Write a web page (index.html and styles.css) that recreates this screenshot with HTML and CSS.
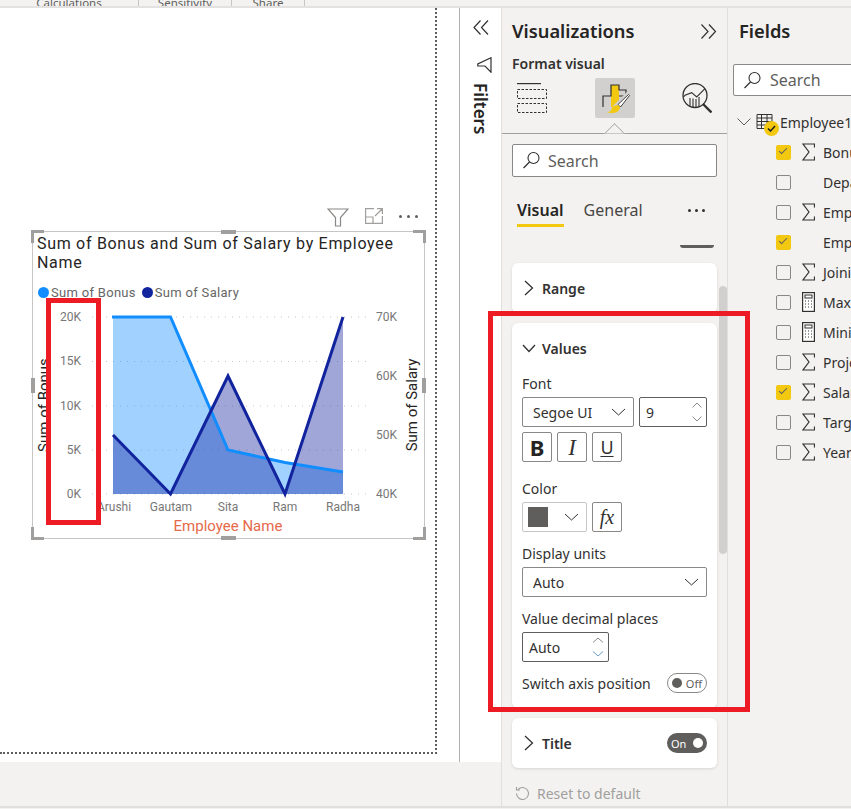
FILE: index.html
```html
<!DOCTYPE html>
<html lang="en">
<head>
    <meta charset="UTF-8">
    <link rel="stylesheet" href="styles.css">
    <title>Format visual</title>
</head>
<body>
    <svg class="defs" width="0" height="0">
        <symbol id="sum" viewBox="0 0 13 18"><path d="M12.500 4.500V1H1l6 8-6 8h11.500v-3.500" fill="none" stroke="#323130" stroke-width="1.200"/></symbol>
        <symbol id="calc" viewBox="0 0 13 20">
            <rect x=".6" y=".6" width="11.800" height="18.800" fill="#fff" stroke="#323130" stroke-width="1.200"/>
            <rect x="3" y="3" width="7" height="3" fill="none" stroke="#323130"/>
            <path d="M3 9h1M6 9h1M9 9h1M3 12h1M6 12h1M9 12h1M3 15h1M6 15h1M9 15h1" stroke="#323130"/>
        </symbol>
    </svg>

    <div class="ribbon">
        <span class="ribbon-group w-calc">Calculations</span>
        <span class="ribbon-group w-sens">Sensitivity</span>
        <span class="ribbon-group w-share">Share</span>
    </div>

    <div class="workspace">
        <div class="report-area">
            <div class="canvas-row">
                <div class="canvas">
                    <div class="visual-tools">
                        <svg width="22" height="19" viewBox="0 0 22 19"><path d="M1 1h20l-7.500 8.500V18h-5V9.500z" fill="none" stroke="#8a8886" stroke-width="1.200"/></svg>
                        <svg width="18" height="16" viewBox="0 0 18 16"><path d="M9 .6H.6v14.800h16.800V8M.6 9H8v6.400M10 8l7-7M12 .6h5.400V6" fill="none" stroke="#a19f9d" stroke-width="1.200"/></svg>
                        <span class="tool-dots"><i></i><i></i><i></i></span>
                    </div>
                    <div class="visual">
                        <h3 class="visual-title">Sum of Bonus and Sum of Salary by Employee Name</h3>
                        <div class="legend">
                            <span class="legend-item"><i class="dot dot-bonus"></i>Sum of Bonus</span>
                            <span class="legend-item"><i class="dot dot-salary"></i>Sum of Salary</span>
                        </div>
                        <svg class="chart" width="390" height="240" viewBox="0 0 390 240">
                            <g class="grid">
                                <line x1="59" x2="333" y1="12" y2="12"/>
                                <line x1="59" x2="333" y1="56.500" y2="56.500"/>
                                <line x1="59" x2="333" y1="101" y2="101"/>
                                <line x1="59" x2="333" y1="145" y2="145"/>
                                <line x1="59" x2="333" y1="189" y2="189"/>
                            </g>
                            <path d="M80 12L137.500 12L195 145L252 157.500L310 167V189H80Z" fill="#118dff" opacity=".4"/>
                            <path d="M80 130L137.500 189L195 71L252 189L310 12V189H80Z" fill="#12239e" opacity=".4"/>
                            <path d="M79 12L137.500 12L195 145L252 157.500L310 167" fill="none" stroke="#118dff" stroke-width="3"/>
                            <path d="M80 130L137.500 189L195 71L252 189L310 12" fill="none" stroke="#12239e" stroke-width="3"/>
                            <g class="tick" text-anchor="end">
                                <text x="48" y="16">20K</text>
                                <text x="48" y="60">15K</text>
                                <text x="48" y="105">10K</text>
                                <text x="48" y="149">5K</text>
                                <text x="48" y="193">0K</text>
                                <text x="364" y="16">70K</text>
                                <text x="364" y="75">60K</text>
                                <text x="364" y="134">50K</text>
                                <text x="364" y="193">40K</text>
                            </g>
                            <g class="tick" text-anchor="middle">
                                <text x="81" y="206">Arushi</text>
                                <text x="138" y="206">Gautam</text>
                                <text x="195" y="206">Sita</text>
                                <text x="252" y="206">Ram</text>
                                <text x="310" y="206">Radha</text>
                            </g>
                            <text class="axis-name axis-x" x="195" y="226" text-anchor="middle">Employee Name</text>
                            <text class="axis-name" transform="translate(16 100) rotate(-90)" text-anchor="middle">Sum of Bonus</text>
                            <text class="axis-name" transform="translate(384 100) rotate(-90)" text-anchor="middle">Sum of Salary</text>
                        </svg>
                        <i class="handle h-tl"></i><i class="handle h-tm"></i><i class="handle h-tr"></i>
                        <i class="handle h-ml"></i><i class="handle h-mr"></i>
                        <i class="handle h-bl"></i><i class="handle h-bm"></i><i class="handle h-br"></i>
                    </div>
                </div>
                <aside class="filters">
                    <svg width="16" height="15" viewBox="0 0 16 15"><path d="M7.500 .5L1 7.500l6.500 7M15 .5L8.500 7.500l6.500 7" fill="none" stroke="#323130" stroke-width="1.200"/></svg>
                    <svg width="15" height="16" viewBox="0 0 15 16" class="filter-icon"><path d="M14 .8v14.400L8 9H.8V7z" fill="none" stroke="#323130" stroke-width="1.200"/></svg>
                    <span class="filters-label">Filters</span>
                </aside>
            </div>
            <div class="page-bar"></div>
        </div>

        <section class="viz-pane">
            <div class="pane-head">
                <h2>Visualizations</h2>
                <svg width="17" height="15" viewBox="0 0 17 15"><path d="M1.500 .5L8 7.500l-6.500 7M9 .5l6.500 7L9 14.500" fill="none" stroke="#323130" stroke-width="1.200"/></svg>
            </div>
            <div class="format-label">Format visual</div>
            <div class="mode-icons">
                <svg width="30" height="30" viewBox="0 0 30 30"><path d="M0 .6h24" stroke="#323130" stroke-width="1.200"/><path d="M.5 6.500h29v9H.5zM.5 20.500h29v9H.5z" fill="none" stroke="#323130" stroke-dasharray="2.500 1.500"/></svg>
                <span class="mode-active">
                    <svg width="30" height="32" viewBox="0 0 30 32">
                        <rect x="11" y="3" width="8" height="22" fill="#f2c811"/>
                        <path d="M3 25V14h8V3h8v5h7v6h-7" fill="none" stroke="#323130" stroke-width="1.200"/>
                        <path d="M15 26L29 12" stroke="#d2d0ce" stroke-width="6"/>
                        <path d="M18 22.500L28.500 12.500 29.500 13.500 20.500 25z" fill="#fff" stroke="#323130" stroke-width=".9"/>
                        <path d="M7 30c3 0 4-1 5-4 1-2 4-3 6-3l2 2c0 3-3 6-7 6-2 0-5 0-6-1z" fill="#f2c811"/>
                    </svg>
                </span>
                <svg width="30" height="30" viewBox="0 0 30 30"><circle cx="13" cy="12.500" r="12" fill="none" stroke="#323130" stroke-width="1.300"/><path d="M1.500 14L3 12.300l6.700-2.600 5 4.300L23 5.700M8 15v9M11 15.500v9M14 16v9M17 14v10" fill="none" stroke="#323130" stroke-width="1.100"/><path d="M21 21l8.500 8.500" stroke="#323130" stroke-width="2.400"/></svg>
            </div>
            <div class="mode-rule"></div>
            <div class="search-box viz-search">
                <svg width="19" height="19" viewBox="0 0 19 19"><circle cx="11.500" cy="7" r="5.500" fill="none" stroke="#323130" stroke-width="1.100"/><path d="M7.500 11L1.500 17" stroke="#323130" stroke-width="1.200"/></svg>
                <span>Search</span>
            </div>
            <div class="tabs">
                <span class="tab tab-active">Visual</span>
                <span class="tab">General</span>
                <span class="tab-dots"><i></i><i></i><i></i></span>
            </div>
            <div class="scroll-stub"></div>

            <div class="cards">
                <div class="card card-collapsed">
                    <svg width="10" height="16" viewBox="0 0 10 16"><path d="M1 1l7.500 7L1 15" fill="none" stroke="#323130" stroke-width="1.300"/></svg>
                    <span class="card-title">Range</span>
                </div>
                <div class="card card-values">
                    <div class="card-open-head">
                        <svg width="14" height="9" viewBox="0 0 14 9"><path d="M1 1l6 6.500L13 1" fill="none" stroke="#323130" stroke-width="1.300"/></svg>
                        <span class="card-title">Values</span>
                    </div>
                    <label class="field-label lbl-font">Font</label>
                    <div class="row">
                        <div class="select w-font"><span>Segoe UI</span><svg width="15" height="8" viewBox="0 0 15 8"><path d="M1 1l6.500 6L14 1" fill="none" stroke="#323130"/></svg></div>
                        <div class="spin w-size">
                            <span>9</span>
                            <span class="spin-arrows"><svg width="10" height="6" viewBox="0 0 10 6"><path d="M.5 5.500L5 1l4.500 4.500" fill="none" stroke="#8a8886"/></svg><svg width="10" height="6" viewBox="0 0 10 6"><path d="M.5.500L5 5 9.500.5" fill="none" stroke="#8a8886"/></svg></span>
                        </div>
                    </div>
                    <div class="row row-fmt">
                        <span class="fmt-btn fmt-b">B</span>
                        <span class="fmt-btn fmt-i">I</span>
                        <span class="fmt-btn fmt-u">U</span>
                    </div>
                    <label class="field-label lbl-color">Color</label>
                    <div class="row">
                        <div class="color-pick"><i class="swatch"></i><svg width="15" height="8" viewBox="0 0 15 8"><path d="M1 1l6.500 6L14 1" fill="none" stroke="#323130"/></svg></div>
                        <span class="fmt-btn fmt-fx">fx</span>
                    </div>
                    <label class="field-label lbl-units">Display units</label>
                    <div class="select w-full"><span>Auto</span><svg width="15" height="8" viewBox="0 0 15 8"><path d="M1 1l6.500 6L14 1" fill="none" stroke="#323130"/></svg></div>
                    <label class="field-label lbl-dec">Value decimal places</label>
                    <div class="spin w-dec">
                        <span>Auto</span>
                        <span class="spin-arrows"><svg width="12" height="6" viewBox="0 0 12 6"><path d="M1 5.500L6 1l5 4.500" fill="none" stroke="#8a8886"/></svg><svg width="12" height="6" viewBox="0 0 12 6"><path d="M1 .5L6 5l5-4.500" fill="none" stroke="#6b9bc0"/></svg></span>
                    </div>
                    <div class="switch-row">
                        <span>Switch axis position</span>
                        <span class="toggle toggle-off"><i></i>Off</span>
                    </div>
                </div>
                <div class="card card-collapsed">
                    <svg width="10" height="16" viewBox="0 0 10 16"><path d="M1 1l7.500 7L1 15" fill="none" stroke="#323130" stroke-width="1.300"/></svg>
                    <span class="card-title">Title</span>
                    <span class="toggle toggle-on">On<i></i></span>
                </div>
            </div>
            <div class="reset">
                <svg width="15" height="15" viewBox="0 0 15 15"><path d="M3 3.500a6 6 0 1 1-1.500 4M1.500 1v3h3.500" fill="none" stroke="#a19f9d" stroke-width="1.100"/></svg>
                <span>Reset to default</span>
            </div>
            <div class="scrollbar"></div>
        </section>

        <section class="fields-pane">
            <h2>Fields</h2>
            <div class="search-box fields-search">
                <svg width="19" height="19" viewBox="0 0 19 19"><circle cx="11.500" cy="7" r="5.500" fill="none" stroke="#323130" stroke-width="1.100"/><path d="M7.500 11L1.500 17" stroke="#323130" stroke-width="1.200"/></svg>
                <span>Search</span>
            </div>
            <div class="table-row">
                <svg class="tree-chev" width="14" height="8" viewBox="0 0 14 8"><path d="M.5.500L7 7 13.500.5" fill="none" stroke="#605e5c"/></svg>
                <span class="table-icon">
                    <svg width="17" height="15" viewBox="0 0 17 15"><path d="M1 .5h15v14H1zM1 4h15M1 7.500h15M1 11h15M5.500 .5v14M11 .5v14" fill="none" stroke="#323130"/></svg>
                    <i class="table-badge"><svg width="9" height="7" viewBox="0 0 9 7"><path d="M1 3.500L3.500 6 8 1" fill="none" stroke="#201f1e" stroke-width="1.500"/></svg></i>
                </span>
                <span class="table-name">Employee1</span>
            </div>
            <ul class="field-list">
                <li><i class="check on"></i><svg class="kind" width="13" height="18"><use href="#sum"/></svg>Bonus</li>
                <li><i class="check"></i><i class="kind"></i>Department</li>
                <li><i class="check"></i><svg class="kind" width="13" height="18"><use href="#sum"/></svg>Employee ID</li>
                <li><i class="check on"></i><i class="kind"></i>Employee Name</li>
                <li><i class="check"></i><svg class="kind" width="13" height="18"><use href="#sum"/></svg>Joining Year</li>
                <li><i class="check"></i><svg class="kind" width="13" height="20"><use href="#calc"/></svg>Max of Salary</li>
                <li><i class="check"></i><svg class="kind" width="13" height="20"><use href="#calc"/></svg>Minimum</li>
                <li><i class="check"></i><svg class="kind" width="13" height="18"><use href="#sum"/></svg>Projects</li>
                <li><i class="check on"></i><svg class="kind" width="13" height="18"><use href="#sum"/></svg>Salary</li>
                <li><i class="check"></i><svg class="kind" width="13" height="18"><use href="#sum"/></svg>Target</li>
                <li><i class="check"></i><svg class="kind" width="13" height="18"><use href="#sum"/></svg>Year</li>
            </ul>
        </section>
    </div>

    <div class="callout callout-axis"></div>
    <div class="callout callout-values"></div>
</body>
</html>
```

FILE: styles.css
```css
* {
    box-sizing: border-box;
}

body {
    margin: 0;
    width: 851px;
    height: 809px;
    overflow: hidden;
    position: relative;
    background-color: #f3f2f1;
    font-family: "Noto Sans", "Open Sans", sans-serif;
    font-size: 14px;
    color: #323130;
}

i {
    font-style: normal;
}

h2, h3, ul {
    margin: 0;
    padding: 0;
}

svg {
    display: block;
    flex: none;
}

.defs {
    position: absolute;
}

/* ribbon strip, only the bottom edge is in the shot */
.ribbon {
    height: 8px;
    display: flex;
    overflow: hidden;
    background-color: #f3f2f1;
    border-bottom: 2px solid #e3e2e0;
    font-size: 11.500px;
    color: #605e5c;
}

.ribbon-group {
    height: 6px;
    display: flex;
    align-items: flex-end;
    justify-content: center;
    border-right: 1px solid #c8c6c4;
    line-height: 6px;
}

.w-calc { width: 139px; }
.w-sens { width: 93px; }
.w-share { width: 73px; }

.workspace {
    display: flex;
    height: 800px;
    border-bottom: 2px solid #e1dfdd;
}

.report-area {
    width: 501px;
    display: flex;
    flex-direction: column;
}

.canvas-row {
    height: 754px;
    display: flex;
    background-color: #fff;
}

.page-bar {
    flex: 1;
    background-color: #f3f2f1;
}

.canvas {
    position: relative;
    width: 460px;
    border-right: 1px solid #b3b0ad;
    padding-top: 200px;
}

/* page edge */
.canvas::after {
    content: "";
    position: absolute;
    left: 0;
    top: 0;
    width: 435px;
    height: 744px;
    border-right: 2px dotted #605e5c;
    border-bottom: 2px dotted #605e5c;
}

.visual-tools {
    height: 23px;
    width: 454px;
    padding-right: 36px;
    display: flex;
    justify-content: flex-end;
    align-items: flex-start;
    gap: 16px;
}

.tool-dots {
    display: flex;
    gap: 5px;
    margin-top: 7px;
    width: 19px;
}

.tool-dots i {
    width: 3px;
    height: 3px;
    border-radius: 50%;
    background-color: #605e5c;
}

.visual {
    position: relative;
    width: 393px;
    height: 308px;
    margin-left: 32px;
    border: 1px solid #c8c6c4;
    background-color: #fff;
}

.visual-title {
    padding: 2px 4px 0;
    font-family: "Roboto", sans-serif;
    font-size: 16px;
    font-weight: 400;
    line-height: 19px;
    letter-spacing: .7px;
    color: #252423;
}

.legend {
    display: flex;
    gap: 6px;
    margin: 12px 0 0 5px;
    font-family: "Roboto", sans-serif;
    font-size: 13px;
    line-height: 17px;
    letter-spacing: .3px;
    color: #666;
}

.legend-item {
    display: flex;
    align-items: center;
    gap: 2px;
}

.dot {
    width: 11px;
    height: 11px;
    border-radius: 50%;
}

.dot-bonus { background-color: #118dff; }
.dot-salary { background-color: #12239e; }

.chart {
    margin-top: 4px;
}

.grid line {
    stroke: #c8c6c4;
    stroke-dasharray: 1 6;
}

.tick text {
    font-family: "Roboto", sans-serif;
    font-size: 12px;
    fill: #777;
}

.axis-name {
    font-family: "Roboto", sans-serif;
    font-size: 15px;
    fill: #252423;
}

.axis-x {
    fill: #e6694a;
}

.handle {
    position: absolute;
    background-color: #a19f9d;
}

.h-tm, .h-bm { left: 188px; width: 15px; height: 4px; }
.h-tm { top: -2px; }
.h-bm { bottom: -2px; }
.h-ml, .h-mr { top: 146px; width: 4px; height: 15px; }
.h-ml { left: -2px; }
.h-mr { right: -2px; }

.h-tl, .h-tr, .h-bl, .h-br {
    width: 13px;
    height: 13px;
    background: none;
    border: 0 solid #a19f9d;
}

.h-tl { left: -2px; top: -2px; border-width: 3px 0 0 3px; }
.h-tr { right: -2px; top: -2px; border-width: 3px 3px 0 0; }
.h-bl { left: -2px; bottom: -2px; border-width: 0 0 3px 3px; }
.h-br { right: -2px; bottom: -2px; border-width: 0 3px 3px 0; }

/* filters rail */
.filters {
    width: 41px;
    padding-top: 12px;
    display: flex;
    flex-direction: column;
    align-items: center;
    color: #252423;
}

.filter-icon {
    margin-top: 22px;
    margin-left: 7px;
}

.filters-label {
    margin-top: 10px;
    margin-left: -2px;
    writing-mode: vertical-rl;
    font-size: 17px;
    font-weight: 600;
    line-height: 18px;
}

/* visualizations pane */
.viz-pane {
    position: relative;
    width: 227px;
    padding: 0 10px;
    border-left: 1px solid #e1dfdd;
    border-right: 1px solid #e1dfdd;
    background-color: #f3f2f1;
}

.pane-head {
    display: flex;
    justify-content: space-between;
    align-items: center;
    height: 28px;
    margin-top: 9px;
}

.pane-head h2, .fields-pane h2 {
    font-size: 18.300px;
    font-weight: 600;
    line-height: 28px;
    color: #252423;
}

.format-label {
    margin-top: 10px;
    font-size: 14px;
    font-weight: 600;
    line-height: 18px;
}

.mode-icons {
    display: flex;
    align-items: center;
    justify-content: space-between;
    margin: 5px -8px 0 5px;
    padding-right: 13px;
    height: 40px;
}

.mode-active {
    width: 40px;
    height: 40px;
    display: flex;
    align-items: center;
    justify-content: center;
    border-radius: 2px;
    background-color: #d2d0ce;
}

.mode-rule {
    position: relative;
    height: 1px;
    margin: 15px -10px 0;
    background-color: #a19f9d;
}

.mode-rule::after {
    content: "";
    position: absolute;
    left: 105px;
    top: -7px;
    width: 14px;
    height: 14px;
    transform: rotate(45deg);
    background-color: #f3f2f1;
    border-left: 1px solid #a19f9d;
    border-top: 1px solid #a19f9d;
    clip-path: polygon(0 0, 100% 0, 0 100%);
}

.search-box {
    display: flex;
    align-items: center;
    gap: 7px;
    height: 33px;
    border: 1px solid #8a8886;
    border-radius: 2px;
    background-color: #fff;
    padding-left: 9px;
    font-size: 16px;
    color: #605e5c;
}

.viz-search {
    margin-top: 10px;
    width: 205px;
}

.tabs {
    position: relative;
    display: flex;
    align-items: flex-start;
    gap: 20px;
    margin: 22px 0 0 5px;
    height: 32px;
    font-size: 16px;
    line-height: 22px;
    color: #484644;
}

.tab {
    height: 28px;
}

.tab-active {
    font-weight: 600;
    color: #252423;
    border-bottom: 3px solid #f2c811;
}

.tab-dots {
    position: absolute;
    right: 12px;
    top: 10px;
    display: flex;
    gap: 4px;
}

.tab-dots i {
    width: 3px;
    height: 3px;
    border-radius: 50%;
    background-color: #323130;
}

.scroll-stub {
    width: 34px;
    height: 3px;
    margin: 14px 0 0 168px;
    border-radius: 0 0 8px 8px;
    background-color: #605e5c;
}

.cards {
    display: flex;
    flex-direction: column;
    gap: 10px;
    margin-top: 15px;
    width: 205px;
}

.card {
    border-radius: 6px;
    background-color: #fff;
    box-shadow: 0 1px 3px rgba(0, 0, 0, .12);
}

.card-collapsed {
    height: 50px;
    padding: 0 10px 0 12px;
    display: flex;
    align-items: center;
    gap: 8px;
}

.card-title {
    font-size: 14px;
    font-weight: 600;
    color: #323130;
}

.card-values {
    height: 385px;
    padding: 15px 10px 0;
}

.card-open-head {
    display: flex;
    align-items: center;
    gap: 6px;
    height: 20px;
}

.field-label {
    display: block;
    font-size: 14px;
    line-height: 18px;
    color: #323130;
}

.lbl-font { margin-top: 17px; margin-bottom: 4px; }
.lbl-color { margin-top: 18px; margin-bottom: 4px; }
.lbl-units { margin-top: 13px; margin-bottom: 4px; }
.lbl-dec { margin-top: 13px; margin-bottom: 4px; }

.row {
    display: flex;
    gap: 5px;
}

.row-fmt {
    margin-top: 5px;
}

.select, .spin, .color-pick {
    display: flex;
    align-items: center;
    justify-content: space-between;
    height: 30px;
    border: 1px solid #8a8886;
    border-radius: 2px;
    font-size: 14px;
    background-color: #fff;
}

.select {
    padding: 0 7px 0 10px;
}

.w-font { width: 112px; }
.w-size { width: 68px; }
.w-full { width: 185px; }
.w-dec { width: 87px; }

.spin {
    padding: 0 3px 0 6px;
    border-color: #605e5c;
}

.spin-arrows {
    display: flex;
    flex-direction: column;
    gap: 8px;
    margin-right: 1px;
}

.fmt-btn {
    width: 30px;
    height: 30px;
    display: flex;
    align-items: center;
    justify-content: center;
    border: 1px solid #8a8886;
    border-radius: 2px;
    background-color: #fff;
    font-size: 19px;
    line-height: 1;
}

.fmt-b {
    font-size: 22px;
    font-weight: 700;
    color: #252423;
}

.fmt-i {
    font-family: "Liberation Serif", serif;
    font-style: italic;
    font-size: 23px;
}

.fmt-u {
    text-decoration: underline;
    text-underline-offset: 2px;
    font-size: 18px;
}

.fmt-fx {
    font-family: "Liberation Serif", serif;
    font-style: italic;
    font-size: 20px;
}

.color-pick {
    width: 65px;
    padding: 0 7px 0 5px;
    border-color: #c8c6c4;
}

.swatch {
    width: 20px;
    height: 20px;
    background-color: #605e5c;
}

.switch-row {
    display: flex;
    align-items: center;
    justify-content: space-between;
    margin-top: 11px;
    height: 20px;
    width: 185px;
}

.toggle {
    display: flex;
    align-items: center;
    justify-content: space-between;
    width: 40px;
    height: 20px;
    padding: 0 4px;
    border-radius: 10px;
    font-size: 11px;
    line-height: 1;
}

.toggle i {
    width: 10px;
    height: 10px;
    border-radius: 50%;
}

.toggle-off {
    border: 1px solid #8a8886;
    color: #605e5c;
}

.toggle-off i {
    background-color: #605e5c;
}

.toggle-on {
    margin-left: auto;
    background-color: #605e5c;
    color: #fff;
}

.toggle-on i {
    background-color: #fff;
}

.reset {
    display: flex;
    align-items: center;
    gap: 7px;
    margin: 16px 0 0 3px;
    height: 18px;
    color: #a19f9d;
}

.scrollbar {
    position: absolute;
    left: 217px;
    top: 278px;
    width: 8px;
    height: 268px;
    border-radius: 4px;
    background-color: #d2d0ce;
}

/* fields pane */
.fields-pane {
    flex: 1;
    min-width: 0;
    padding: 9px 0 0 11px;
    overflow: hidden;
    background-color: #f3f2f1;
    white-space: nowrap;
}

.fields-search {
    margin: 19px 0 0 -6px;
    width: 140px;
    height: 32px;
    gap: 8px;
}

.table-row {
    display: flex;
    align-items: center;
    margin: 16px 0 0 -2px;
    height: 20px;
}

.tree-chev {
    margin-right: 5px;
}

.table-icon {
    position: relative;
    width: 24px;
    height: 16px;
    flex: none;
}

.table-badge {
    position: absolute;
    left: 8px;
    top: 7px;
    width: 15px;
    height: 15px;
    display: flex;
    align-items: center;
    justify-content: center;
    border-radius: 50%;
    background-color: #f2c811;
}

.field-list {
    list-style: none;
    margin-top: 5px;
    padding-left: 37px;
}

.field-list li {
    display: flex;
    align-items: center;
    height: 30px;
}

.check {
    position: relative;
    flex: none;
    width: 15px;
    height: 15px;
    margin-right: 11px;
    border: 1px solid #8a8886;
    border-radius: 2px;
    background-color: #f3f2f1;
}

.check.on {
    border: 0;
    background-color: #f2c811;
}

.check.on::after {
    content: "";
    position: absolute;
    left: 3px;
    top: 3px;
    width: 7px;
    height: 3px;
    transform: rotate(-45deg);
    border-left: 1px solid #605e5c;
    border-bottom: 1px solid #605e5c;
}

.kind {
    flex: none;
    width: 13px;
    margin-right: 8px;
}

/* red markup on top of the shot */
.callout {
    position: absolute;
    border: 5px solid #ed1c24;
    pointer-events: none;
}

.callout-axis {
    left: 46px;
    top: 298px;
    width: 55px;
    height: 227px;
}

.callout-values {
    left: 488px;
    top: 311px;
    width: 262px;
    height: 401px;
}
```
